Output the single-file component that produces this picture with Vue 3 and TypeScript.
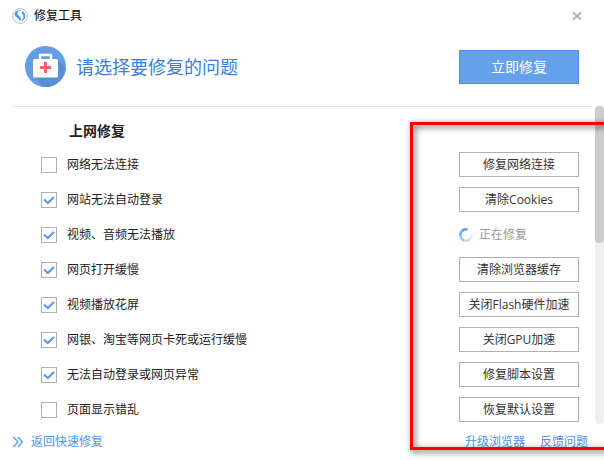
<script setup lang="ts">
import { ref } from 'vue'

interface RepairItem {
  id: string
  label: string
  action: string
  checked: boolean
  busy?: boolean
}

const items = ref<RepairItem[]>([
  { id: 'network', label: '网络无法连接', action: '修复网络连接', checked: false },
  { id: 'login', label: '网站无法自动登录', action: '清除Cookies', checked: true },
  { id: 'media', label: '视频、音频无法播放', action: '正在修复', checked: true, busy: true },
  { id: 'slow', label: '网页打开缓慢', action: '清除浏览器缓存', checked: true },
  { id: 'video', label: '视频播放花屏', action: '关闭Flash硬件加速', checked: true },
  { id: 'bank', label: '网银、淘宝等网页卡死或运行缓慢', action: '关闭GPU加速', checked: true },
  { id: 'script', label: '无法自动登录或网页异常', action: '修复脚本设置', checked: true },
  { id: 'layout', label: '页面显示错乱', action: '恢复默认设置', checked: false },
])
</script>

<template>
  <main class="window">
    <header class="titlebar">
      <svg class="logo" viewBox="0 0 16 16" aria-hidden="true">
        <circle cx="8" cy="8" r="7.4" fill="#fff" stroke="#9dbde8" />
        <path d="M9.200 2.500C5.500 1.800 2.600 3.900 2.700 6.600C2.800 9 5.400 9.700 6.700 10.700C7.700 11.500 7.500 12.700 6.600 13.500C9.200 12.700 9.700 10.400 8.200 8.900C6.900 7.600 5.200 7 5.400 5.300C5.600 3.700 7.200 2.700 9.200 2.500Z" fill="#4f93e4" />
        <path d="M10.600 3.200C9.500 4.300 9.600 5.500 10.700 6.600C12 7.900 11.900 10.600 9.300 13.200C12 12.500 13.500 10.300 13.400 7.900C13.300 5.900 12.200 4.200 10.600 3.200Z" fill="#5c9be6" />
      </svg>
      <span class="title">修复工具</span>
      <button class="close" type="button" aria-label="关闭">
        <svg viewBox="0 0 10 10" aria-hidden="true">
          <path d="M1 1.500L9 8.500M9 1.500L1 8.500" stroke="#b4b4b4" stroke-width="2" />
        </svg>
      </button>
    </header>

    <section class="banner">
      <svg class="kit" viewBox="0 0 41 41" aria-hidden="true">
        <defs>
          <clipPath id="kit-disc"><circle cx="20.500" cy="20.500" r="20.500" /></clipPath>
        </defs>
        <g clip-path="url(#kit-disc)">
          <rect width="41" height="41" fill="#659de5" />
          <path d="M27 8L45 26V45H22L9 31L33 13Z" fill="#5a8fd6" />
        </g>
        <path d="M15 13V9H26V13" fill="none" stroke="#fff" stroke-width="2.500" stroke-linejoin="round" />
        <rect x="8" y="13" width="25" height="18.500" rx="1.500" fill="#fff" />
        <path d="M20.500 16V27M15 21.500H26" stroke="#ff5f66" stroke-width="3" />
      </svg>
      <h1>请选择要修复的问题</h1>
      <button class="primary" type="button">立即修复</button>
    </section>

    <div class="body">
      <section class="content">
        <h2>上网修复</h2>
        <ul class="list">
          <li v-for="item in items" :key="item.id" class="row">
            <label class="option">
              <span class="box">
                <input v-model="item.checked" type="checkbox" />
                <svg v-if="item.checked" viewBox="0 0 16 16" aria-hidden="true">
                  <path d="M3 7.500L6.800 11L13 5" fill="none" stroke="#559af0" stroke-width="2" />
                </svg>
              </span>
              <span>{{ item.label }}</span>
            </label>
            <span v-if="item.busy" class="busy" role="status">
              <svg viewBox="0 0 14 14" fill="none" stroke-width="2.500" aria-hidden="true">
                <path d="M8.500 1.500A5.700 5.700 0 0 0 3 3" stroke="#4f9df8" />
                <path d="M3 3A5.700 5.700 0 0 0 1.500 8.500" stroke="#69acf9" />
                <path d="M1.500 8.500A5.700 5.700 0 0 0 5.500 12.500" stroke="#98c6fb" />
                <path d="M5.500 12.500A5.700 5.700 0 0 0 11 11" stroke="#c2dcfd" />
                <path d="M11 11A5.700 5.700 0 0 0 12.700 6.500" stroke="#e0edfe" />
              </svg>
              {{ item.action }}
            </span>
            <button v-else class="action" type="button">{{ item.action }}</button>
          </li>
        </ul>
      </section>
      <div class="track" aria-hidden="true"><div class="thumb"></div></div>
    </div>

    <footer class="footer">
      <a class="back" href="#">
        <svg viewBox="0 0 10 12" fill="none" stroke="#5c9bec" stroke-width="1.300" aria-hidden="true">
          <path d="M0.500 1L5 6L0.500 11M5 1L9.300 6L5 11" />
        </svg>
        返回快速修复
      </a>
      <nav class="links">
        <a href="#">升级浏览器</a>
        <a href="#">反馈问题</a>
      </nav>
    </footer>

    <div class="highlight" aria-hidden="true"></div>
  </main>
</template>

<style>
body {
  margin: 0;
  background: #fff;
}
</style>

<style scoped>
.window {
  position: relative;
  display: flex;
  flex-direction: column;
  min-height: 100vh;
  overflow: hidden;
  color: #222;
  background: #fff;
  font: 12px/20px "Open Sans", "Noto Sans CJK SC", sans-serif;
}

button {
  box-sizing: border-box;
  padding: 0;
  font: inherit;
  cursor: pointer;
}

svg {
  display: block;
}

a {
  color: #4e95ea;
  text-decoration: none;
}

h1,
h2,
ul {
  margin: 0;
  padding: 0;
  font-weight: 400;
}

.titlebar {
  display: flex;
  align-items: center;
  height: 32px;
  padding: 0 22px 0 12px;
}

.logo {
  width: 16px;
  height: 16px;
}

.title {
  margin-left: 6px;
  color: #000;
}

.close {
  margin-left: auto;
  border: 0;
  background: none;
}

.close svg {
  width: 10px;
  height: 10px;
}

.banner {
  display: flex;
  align-items: center;
  padding: 14px 25px 19px;
}

.kit {
  width: 41px;
  height: 41px;
}

h1 {
  margin-left: 10px;
  color: #3a80d9;
  font-size: 18px;
  line-height: 28px;
}

.primary {
  width: 120px;
  height: 34px;
  margin-left: auto;
  border: 1px solid #4a90ee;
  background: #65a0ea;
  color: #fff;
  font-size: 14px;
}

.body {
  display: flex;
  gap: 3px;
  padding-left: 12px;
}

.content {
  flex: 1;
  padding: 14px 13px 2px 29px;
  border-top: 1px solid #e6e6e6;
}

h2 {
  padding-left: 28px;
  font-size: 14px;
  font-weight: 700;
}

.list {
  display: grid;
  gap: 10px;
  padding-top: 11px;
  list-style: none;
}

.row {
  display: flex;
  align-items: center;
  justify-content: space-between;
  height: 25px;
}

.option {
  display: flex;
  align-items: center;
  gap: 10px;
}

.box {
  display: grid;
  width: 16px;
  height: 16px;
}

.box > * {
  grid-area: 1 / 1;
}

.box svg {
  position: relative;
  pointer-events: none;
}

.box input {
  box-sizing: border-box;
  width: 16px;
  height: 16px;
  margin: 0;
  border: 1px solid #b0b0b0;
  background: #fff;
  appearance: none;
}

.action,
.busy {
  width: 120px;
}

.action {
  height: 25px;
  border: 1px solid #b0b0b0;
  background: #fff;
  color: #333;
}

.busy {
  display: flex;
  align-items: center;
  gap: 6px;
  color: #999;
}

.busy svg {
  width: 14px;
  height: 14px;
}

.track {
  width: 9px;
  border-radius: 4px;
  background: #f0f0f0;
}

.thumb {
  height: 43%;
  border-radius: 4px;
  background: #cdcdcd;
}

.footer {
  display: flex;
  justify-content: space-between;
  padding: 8px 16px 8px 13px;
}

.back {
  display: flex;
  align-items: center;
  gap: 8px;
}

.back svg {
  width: 10px;
  height: 12px;
}

.links {
  display: flex;
  gap: 15px;
}

/* Callout frame drawn over the action column; its right edge runs off the window. */
.highlight {
  position: absolute;
  top: 122px;
  right: -12px;
  bottom: 10px;
  width: 200px;
  border: 3px solid #f00;
  filter: drop-shadow(2px 2px 3px rgba(0, 0, 0, 0.7));
  pointer-events: none;
}
</style>
